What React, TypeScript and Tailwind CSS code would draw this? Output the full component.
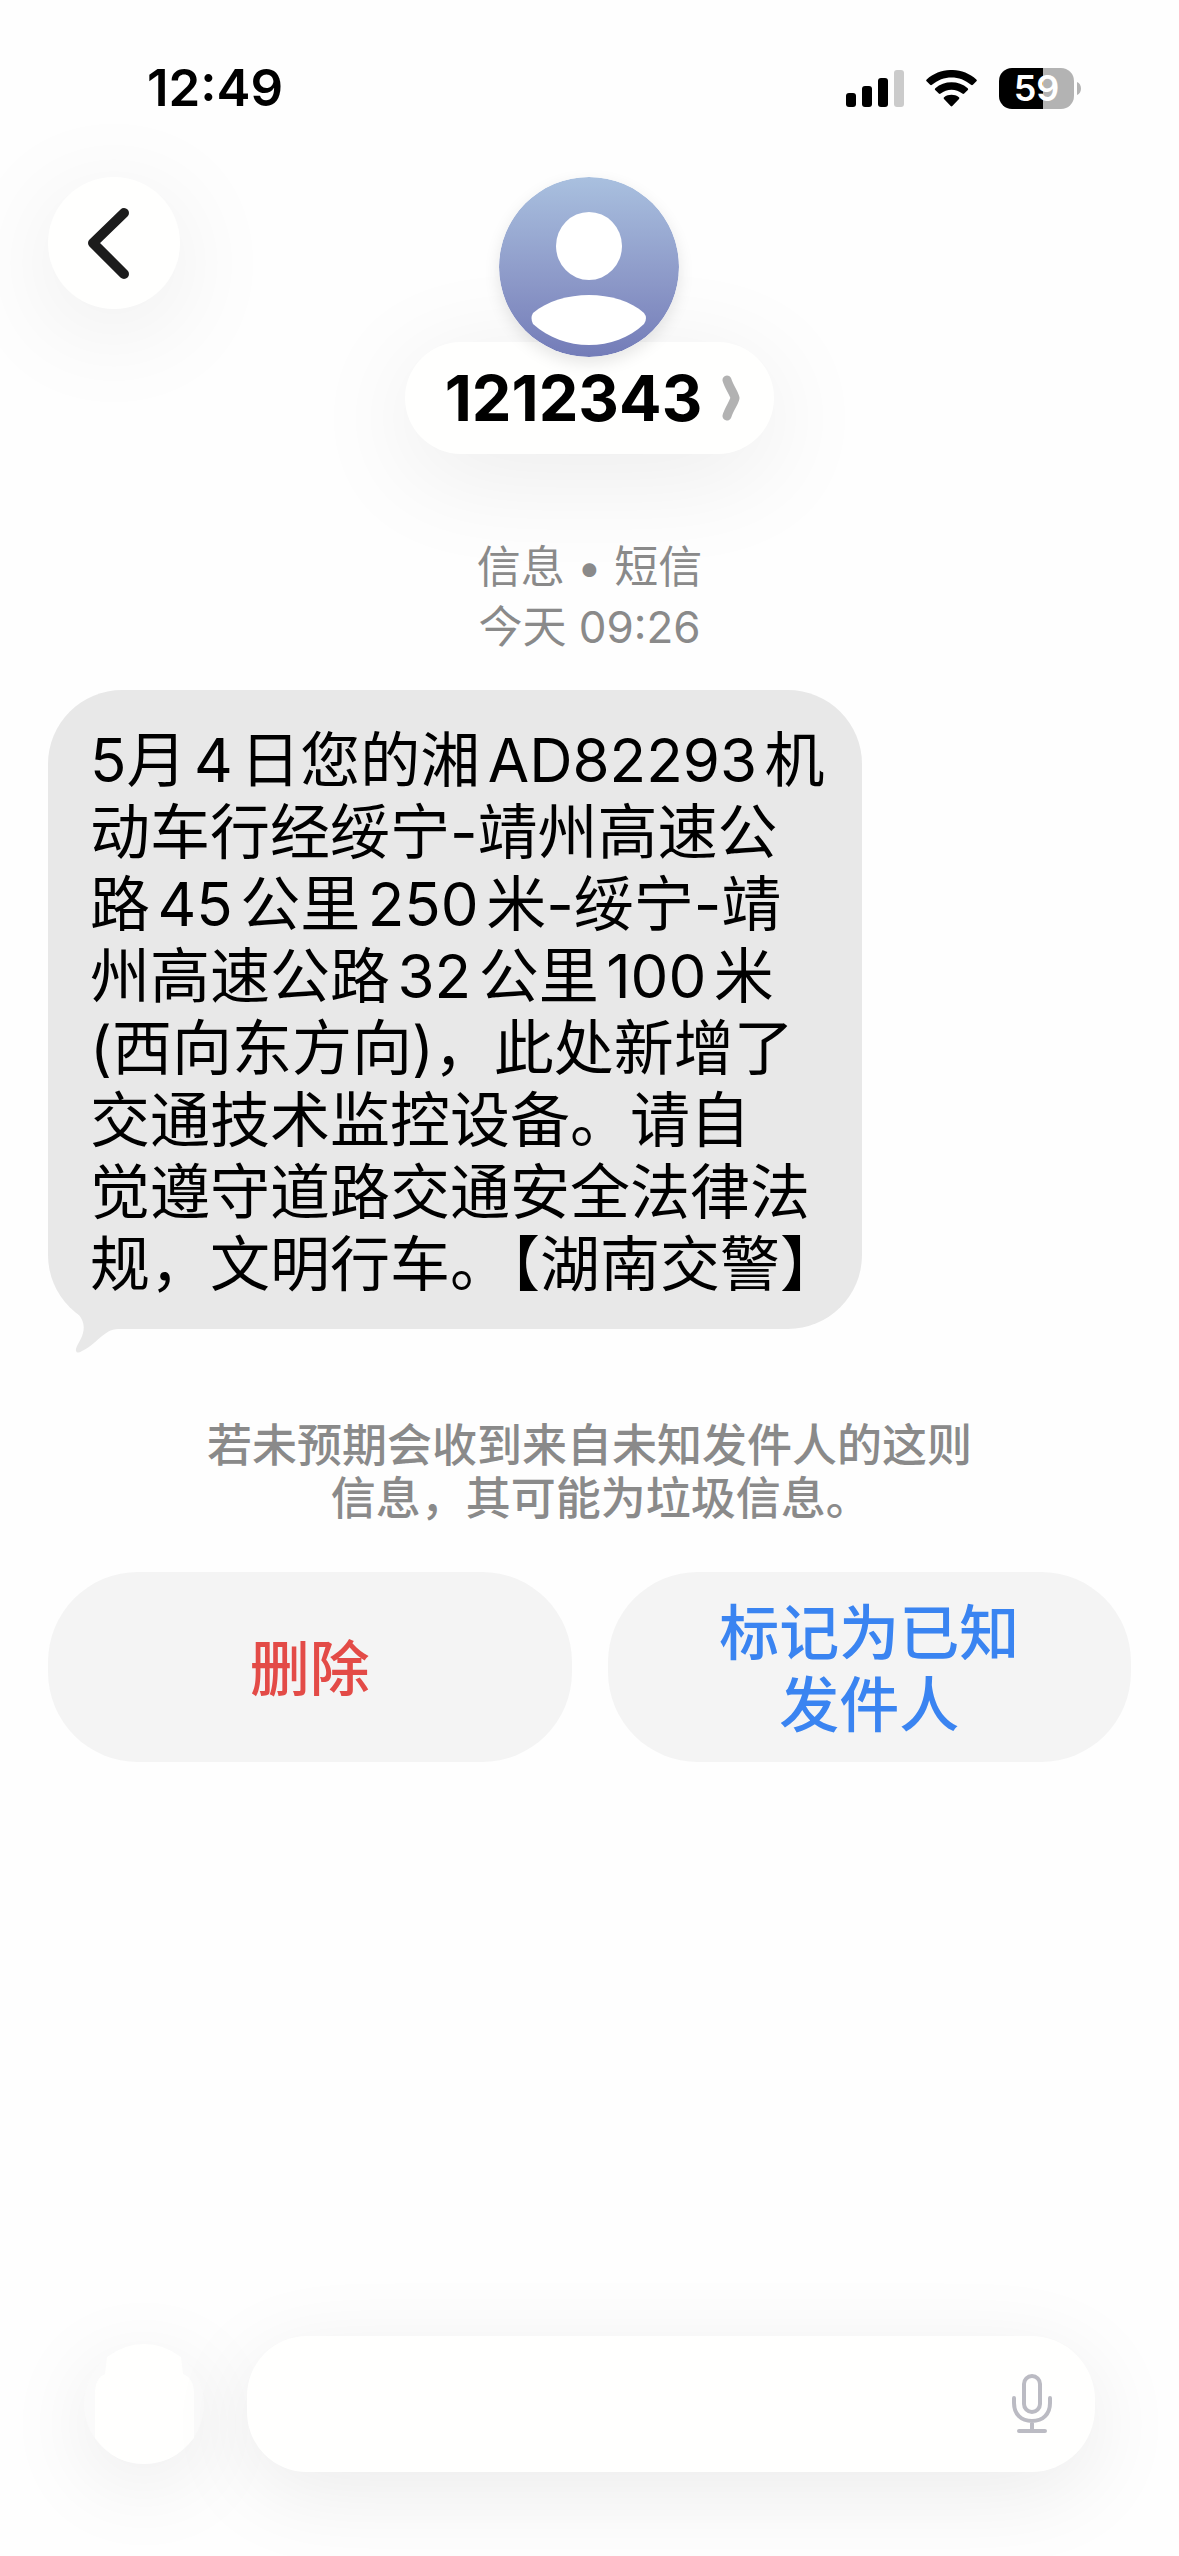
import React, { useState } from "react";

const MESSAGE_LINES = [
    "月4日您的湘AD82293机",
    "动车行经绥宁-靖州高速公",
    "路45公里250米-绥宁-靖",
    "州高速公路32公里100米",
    "(西向东方向)，此处新增了",
    "交通技术监控设备。请自",
    "觉遵守道路交通安全法律法",
    "规，文明行车。【湖南交警】"
];

const SignalIcon = () => (
    <svg width="58" height="37" viewBox="0 0 58 37" aria-hidden="true">
        <rect x="0" y="23" width="10" height="14" rx="3" />
        <rect x="16" y="16" width="10" height="21" rx="3" />
        <rect x="32" y="8" width="10" height="29" rx="3" />
        <rect x="48" y="0" width="10" height="37" rx="3" fill="#cbcbcb" />
    </svg>
);

const WifiIcon = () => (
    <svg width="51" height="37" viewBox="0 0 51 37" aria-hidden="true">
        <path d="M0.6 11.3 Q-0.3 10.4 0.7 9.5 C14.5 -3.2 36.5 -3.2 50.3 9.5 Q51.3 10.4 50.4 11.3 L46.9 14.8 Q46 15.6 45 14.8 C34 4.9 17 4.9 6 14.8 Q5 15.6 4.1 14.8 Z" />
        <path d="M9.2 20 Q8.3 19.1 9.3 18.2 C18.5 10.4 32.5 10.4 41.7 18.2 Q42.7 19.1 41.8 20 L38.2 23.6 Q37.3 24.4 36.3 23.6 C30.2 18.5 20.8 18.5 14.7 23.6 Q13.7 24.4 12.8 23.6 Z" />
        <path d="M18 28.9 Q17.1 28 18.1 27.2 C22.5 24 28.5 24 32.9 27.2 Q33.9 28 33 28.9 L26.3 36 Q25.5 36.8 24.7 36 Z" />
    </svg>
);

function Battery({ level }: { level: number }) {
    return (
        <div className="flex items-center gap-[3px]">
            <div
                className="flex h-[41px] w-[75px] items-center justify-center rounded-[13px]"
                style={{ background: `linear-gradient(to right, #000 ${level}%, #b3b3b3 ${level}%)` }}
            >
                <span className="text-[36px] leading-[40px] font-semibold text-white">{level}</span>
            </div>
            <svg width="4" height="13" viewBox="0 0 4 13" aria-hidden="true">
                <path d="M0 0 C5.3 2 5.3 11 0 13 Z" fill="#b3b3b3" />
            </svg>
        </div>
    );
}

function StatusBar() {
    return (
        <div className="flex h-[177px] items-start justify-between pt-[58px] pr-[98px] pl-[147px]">
            <span className="text-[51px] leading-[60px] font-semibold">12:49</span>
            <div className="flex h-[60px] items-center gap-[22px]">
                <SignalIcon />
                <WifiIcon />
                <Battery level={59} />
            </div>
        </div>
    );
}

const Avatar = () => (
    <svg width="180" height="180" viewBox="0 0 180 180" className="rounded-full shadow-[0_6px_16px_rgba(0,0,0,0.1)]" aria-hidden="true">
        <defs>
            <linearGradient id="avatar" x1="0" y1="0" x2="0" y2="1">
                <stop offset="0" stopColor="#a9c0df" />
                <stop offset="0.6" stopColor="#8b97c7" />
                <stop offset="1" stopColor="#737cb8" />
            </linearGradient>
        </defs>
        <circle cx="90" cy="90" r="90" fill="url(#avatar)" />
        <ellipse cx="90" cy="69" rx="33" ry="34" fill="#fff" />
        <path d="M34 136 C48 124 69 118 90 118 C111 118 132 124 145 136 Q149 141 145 147 C130 161 111 168 90 168 C69 168 50 161 34 147 Q31 141 34 136 Z" fill="#fff" />
    </svg>
);

function Header() {
    return (
        <header className="grid grid-cols-[132px_1fr_132px] items-start px-12">
            <button
                aria-label="返回"
                className="flex size-[132px] items-center justify-center rounded-full bg-[#fffffe] shadow-[0_20px_110px_rgba(0,0,0,0.08)]"
            >
                <svg width="132" height="132" viewBox="0 0 132 132" fill="none" stroke="#1c1c1c" strokeWidth="10" strokeLinecap="round" strokeLinejoin="round" aria-hidden="true">
                    <path d="M76 36 L45 66 L76 97" />
                </svg>
            </button>
            <button className="flex flex-col items-center justify-self-center">
                <div className="z-10 -mb-[15px]">
                    <Avatar />
                </div>
                <div className="flex h-28 items-center gap-5 rounded-full bg-[#fffffe] pr-[34px] pl-10 shadow-[0_20px_110px_rgba(0,0,0,0.08)]">
                    <span className="text-[63px] leading-[72px] font-bold">1212343</span>
                    <svg width="18" height="46" viewBox="0 0 18 46" fill="none" stroke="#b2b2b2" strokeWidth="9" strokeLinecap="round" strokeLinejoin="round" aria-hidden="true">
                        <path d="M5 5 C7 12 12 18 13 23 C12 28 7 34 5 41" />
                    </svg>
                </div>
            </button>
        </header>
    );
}

function Bubble() {
    return (
        <div className="relative mt-[33px] w-[814px] max-w-full rounded-[74px] bg-[#e8e8e8] pt-[34px] pr-8 pb-[29px] pl-[42px]">
            <p className="text-[60px] leading-[72px] whitespace-nowrap text-black [text-autospace:normal]">
                {/* Keep the month tight */}
                <span className="[text-autospace:no-autospace]">5</span>
                {MESSAGE_LINES.map((line, i) => (
                    <React.Fragment key={line}>
                        {i > 0 && <br />}
                        {line}
                    </React.Fragment>
                ))}
            </p>
            {/* Tail */}
            <svg width="90" height="60" viewBox="0 0 90 60" className="absolute -bottom-6 left-5" aria-hidden="true">
                <path d="M8 18 C15 26 17 32 15 40 C13 48 7 54 8 58 Q9 61 14 58 C28 52 36 36 50 36 L70 36 L40 10 Z" fill="#e8e8e8" />
            </svg>
        </div>
    );
}

function Composer() {
    const [text, setText] = useState("");

    return (
        <footer className="mt-auto flex items-center gap-[43px] px-[84px] pb-[84px]">
            <button aria-label="添加" className="size-[120px] shrink-0 rounded-full bg-[#fafafa] shadow-[0_20px_90px_rgba(0,0,0,0.08)]">
                <svg width="120" height="120" viewBox="0 0 120 120" aria-hidden="true">
                    <path d="M23 13 Q40 0 60 0 Q80 0 97 13 L99 30 Q110 34 110 50 V94 Q90 120 60 120 Q30 120 11 94 V50 Q11 34 21 30 Z" fill="#fffffe" />
                </svg>
            </button>
            <div className="flex h-[136px] min-w-0 flex-1 items-center rounded-l-[60px] rounded-r-[64px] bg-[#fffffe] pr-[42px] pl-12 shadow-[0_20px_90px_rgba(0,0,0,0.08)]">
                <input
                    type="text"
                    aria-label="短信"
                    value={text}
                    onChange={(e) => setText(e.target.value)}
                    className="h-full w-full min-w-0 flex-1 bg-transparent text-[60px] outline-none"
                />
                <button aria-label="听写" className="shrink-0">
                    <svg width="42" height="60" viewBox="0 0 42 60" fill="none" stroke="#bbbbc3" strokeWidth="4" strokeLinecap="round" aria-hidden="true">
                        <rect x="13" y="2" width="16" height="36" rx="8" />
                        <path d="M3 24 V29 C3 40 10 47 21 47 C32 47 39 40 39 29 V24 M21 47 V57 M8 57 H34" />
                    </svg>
                </button>
            </div>
        </footer>
    );
}

export default function App() {
    return (
        <div className="flex min-h-screen flex-col overflow-x-hidden bg-[#fefefe] font-['Inter','Noto_Sans_CJK_SC',sans-serif] text-black">
            <StatusBar />
            <Header />

            <main className="px-12">
                <p className="mt-[83px] text-center text-[44px] leading-[60px] text-[#8a8a8a]">
                    信息 • 短信
                    <br />
                    今天 09:26
                </p>

                <Bubble />

                <p className="mt-[90px] text-center text-[45px] leading-[53px] font-medium text-[#8a8a8a]">
                    若未预期会收到来自未知发件人的这则
                    <br />
                    信息，其可能为垃圾信息<span className="[font-feature-settings:'halt']">。</span>
                </p>

                <div className="mt-[47px] grid grid-cols-2 gap-9 text-[60px] leading-[72px] font-medium">
                    <button className="h-[190px] rounded-[90px] bg-[#f4f4f4] pt-[3px] text-[#e34b47]">删除</button>
                    <button className="h-[190px] rounded-[90px] bg-[#f4f4f4] pt-[3px] text-[#3a84f1]">
                        标记为已知
                        <br />
                        发件人
                    </button>
                </div>
            </main>

            <Composer />
        </div>
    );
}
